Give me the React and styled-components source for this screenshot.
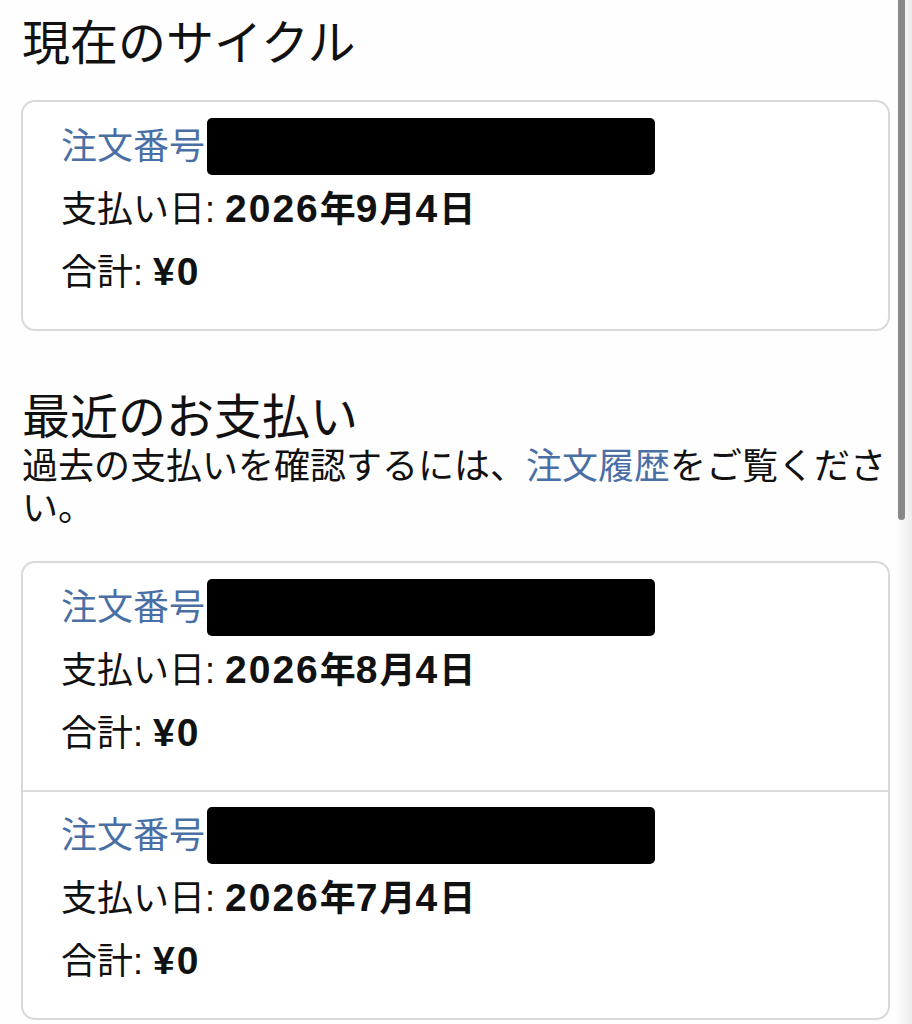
import React from "react";
import styled, { createGlobalStyle } from "styled-components";

const GlobalStyle = createGlobalStyle`
  html, body {
    margin: 0;
    padding: 0;
    background: #fefefe;
    overflow: hidden;
  }
  body {
    font-family: "Noto Sans CJK JP", "Noto Sans", sans-serif;
    color: #111;
  }
`;

const Page = styled.div`
  padding: 10px 22px 0 21px;
`;

const Heading = styled.h2`
  margin: 0;
  font-size: 48px;
  line-height: 58px;
  font-weight: 400;
  padding-left: 1px;
  margin-top: ${(props) => props.$top || 0}px;
`;

const Note = styled.p`
  margin: 0;
  font-size: 36px;
  line-height: 42px;
  padding-left: 1px;
`;

const Link = styled.a`
  color: #4a6fa5;
  text-decoration: none;
`;

const Card = styled.div`
  border: 2px solid #d9d9d9;
  border-radius: 14px;
  background: #fff;
  margin-top: ${(props) => props.$top}px;
  overflow: hidden;
`;

const Item = styled.div`
  padding: 10px 38px 28px;
  & + & {
    border-top: 2px solid #dcdcdc;
    padding-top: 9px;
  }
`;

const Row = styled.div`
  height: 63px;
  font-family: "Liberation Sans", "Noto Sans CJK JP", sans-serif;
  font-size: 36px;
  line-height: 63px;
  white-space: nowrap;
`;

const Label = styled.span`
  font-family: "Noto Sans CJK JP", sans-serif;
`;

const Value = styled.b`
  font-family: "Noto Sans CJK JP", sans-serif;
  font-weight: 700;
`;

const Num = styled.span`
  font-family: "Liberation Sans", Arial, sans-serif;
  font-size: 39px;
  letter-spacing: 2px;
`;

const Redacted = styled.span`
  display: inline-block;
  vertical-align: middle;
  width: 448px;
  height: 57px;
  margin-left: 2px;
  margin-top: -6px;
  background: #000;
  border-radius: 5px;
`;

const ScrollTrack = styled.div`
  position: fixed;
  top: 0;
  right: 0;
  width: 16px;
  height: 100%;
  background: linear-gradient(to right, rgba(255, 255, 255, 0), #ececec);
  pointer-events: none;
`;

const ScrollThumb = styled.div`
  position: absolute;
  top: -10px;
  right: 7px;
  width: 7px;
  height: 530px;
  border-radius: 4px;
  background: #888;
`;

// digits and the yen sign come from a latin face, the rest from the CJK one
const Amount = ({ text }) => (
  <Value>
    {text.split(/([¥\d]+)/).map((part, i) =>
      /[¥\d]/.test(part) ? <Num key={i}>{part}</Num> : part
    )}
  </Value>
);

const Payment = ({ date }) => (
  <Item>
    <Row>
      <Link href="#">
        <Label>注文番号</Label>
      </Link>
      <Redacted />
    </Row>
    <Row>
      <Label>支払い日</Label>: <Amount text={date} />
    </Row>
    <Row>
      <Label>合計</Label>: <Amount text="¥0" />
    </Row>
  </Item>
);

export default function App() {
  return (
    <>
      <GlobalStyle />
      <Page>
        <Heading>現在のサイクル</Heading>
        <Card $top={32}>
          <Payment date="2026年9月4日" />
        </Card>

        <Heading $top={53}>最近のお支払い</Heading>
        <Note>
          過去の支払いを確認するには、<Link href="#">注文履歴</Link>をご覧ください。
        </Note>
        <Card $top={35}>
          <Payment date="2026年8月4日" />
          <Payment date="2026年7月4日" />
        </Card>
      </Page>
      <ScrollTrack>
        <ScrollThumb />
      </ScrollTrack>
    </>
  );
}
